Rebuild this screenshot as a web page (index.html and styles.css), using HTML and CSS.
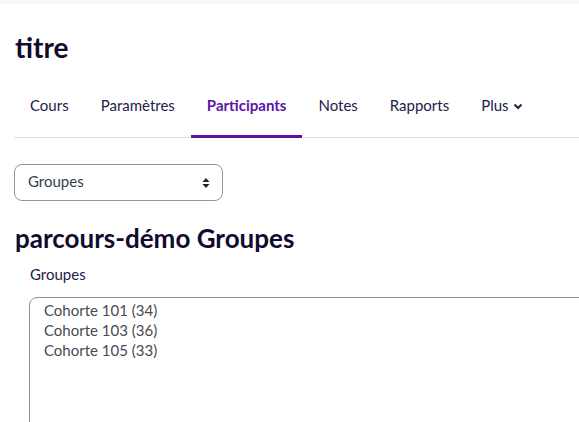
FILE: index.html
```html
<!DOCTYPE html>
<html lang="fr">
<head>
<meta charset="utf-8">
<title>titre - Groupes</title>
<link rel="stylesheet" href="styles.css">
</head>
<body>
<div class="topstrip"></div>
<main class="page">
  <h1 class="title">titre</h1>
  <nav class="tabs">
    <a class="tab" href="#">Cours</a>
    <a class="tab" href="#">Paramètres</a>
    <a class="tab active" href="#">Participants</a>
    <a class="tab" href="#">Notes</a>
    <a class="tab" href="#">Rapports</a>
    <a class="tab" href="#">Plus <svg class="chev" width="10" height="8" viewBox="0 0 10 8"><path d="M1.5 2.5 L5 6 L8.5 2.5" fill="none" stroke="currentColor" stroke-width="2"/></svg></a>
  </nav>
  <div class="selectbox">
    <span>Groupes</span>
    <svg class="updown" width="8" height="12" viewBox="0 0 8 12"><path d="M4 1 L7.5 5 H0.5 Z M4 11 L0.5 7 H7.5 Z" fill="#1d2125"/></svg>
  </div>
  <h2 class="subtitle">parcours-démo Groupes</h2>
  <div class="field">
    <label class="label">Groupes</label>
    <div class="listbox">
      <div class="opt">Cohorte 101 (34)</div>
      <div class="opt">Cohorte 103 (36)</div>
      <div class="opt">Cohorte 105 (33)</div>
    </div>
  </div>
</main>
</body>
</html>
```
FILE: styles.css
```css
html, body {
  margin: 0;
  padding: 0;
  background: #fff;
  overflow: hidden;
}
body {
  font-family: Lato, "Noto Sans", sans-serif;
  color: #1d2125;
  width: 579px;
  height: 422px;
}
.topstrip {
  height: 4px;
  background: #fcf5fc;
}
.page {
  padding-left: 15px;
}
.title {
  margin: 0;
  padding-top: 26px;
  font-size: 28px;
  font-weight: 700;
  line-height: 34px;
  color: #110b2e;
}
.tabs {
  display: flex;
  margin-top: 22px;
  margin-left: -1px;
  border-bottom: 1px solid #dee2e6;
}
.tab {
  display: flex;
  align-items: center;
  gap: 4px;
  padding: 8px 16px 19px;
  line-height: 22px;
  margin-bottom: -1px;
  border-bottom: 3px solid transparent;
  font-size: 15px;
  color: #1d2149;
  text-decoration: none;
}
.tab:first-child {
  margin-left: 1px;
  padding-left: 15px;
}
.tab.active {
  color: #5b15a8;
  font-weight: 700;
  border-bottom-color: #5a13a8;
}
.chev {
  margin-top: 2px;
}
.selectbox {
  box-sizing: border-box;
  width: 209px;
  height: 37px;
  margin-top: 26px;
  margin-left: -1px;
  border: 1px solid #8f959e;
  border-radius: 8px;
  display: flex;
  align-items: center;
  justify-content: space-between;
  padding: 0 12px 4px 13px;
  font-size: 15px;
  color: #333f4f;
}
.updown {
  margin-top: 4px;
}
.subtitle {
  margin: 21px 0 0 0;
  font-size: 26px;
  font-weight: 700;
  line-height: 32px;
  color: #110b2e;
}
.field {
  padding-left: 15px;
}
.label {
  display: block;
  margin-top: 10px;
  font-size: 15px;
  line-height: 20px;
  color: #1d2149;
}
.listbox {
  box-sizing: border-box;
  margin-top: 13px;
  margin-left: -1px;
  margin-right: -40px;
  height: 160px;
  border: 1px solid #8f959e;
  border-radius: 8px;
  padding: 2px 14px;
}
.opt {
  font-size: 15px;
  line-height: 20px;
  color: #4a4a4f;
}
```
